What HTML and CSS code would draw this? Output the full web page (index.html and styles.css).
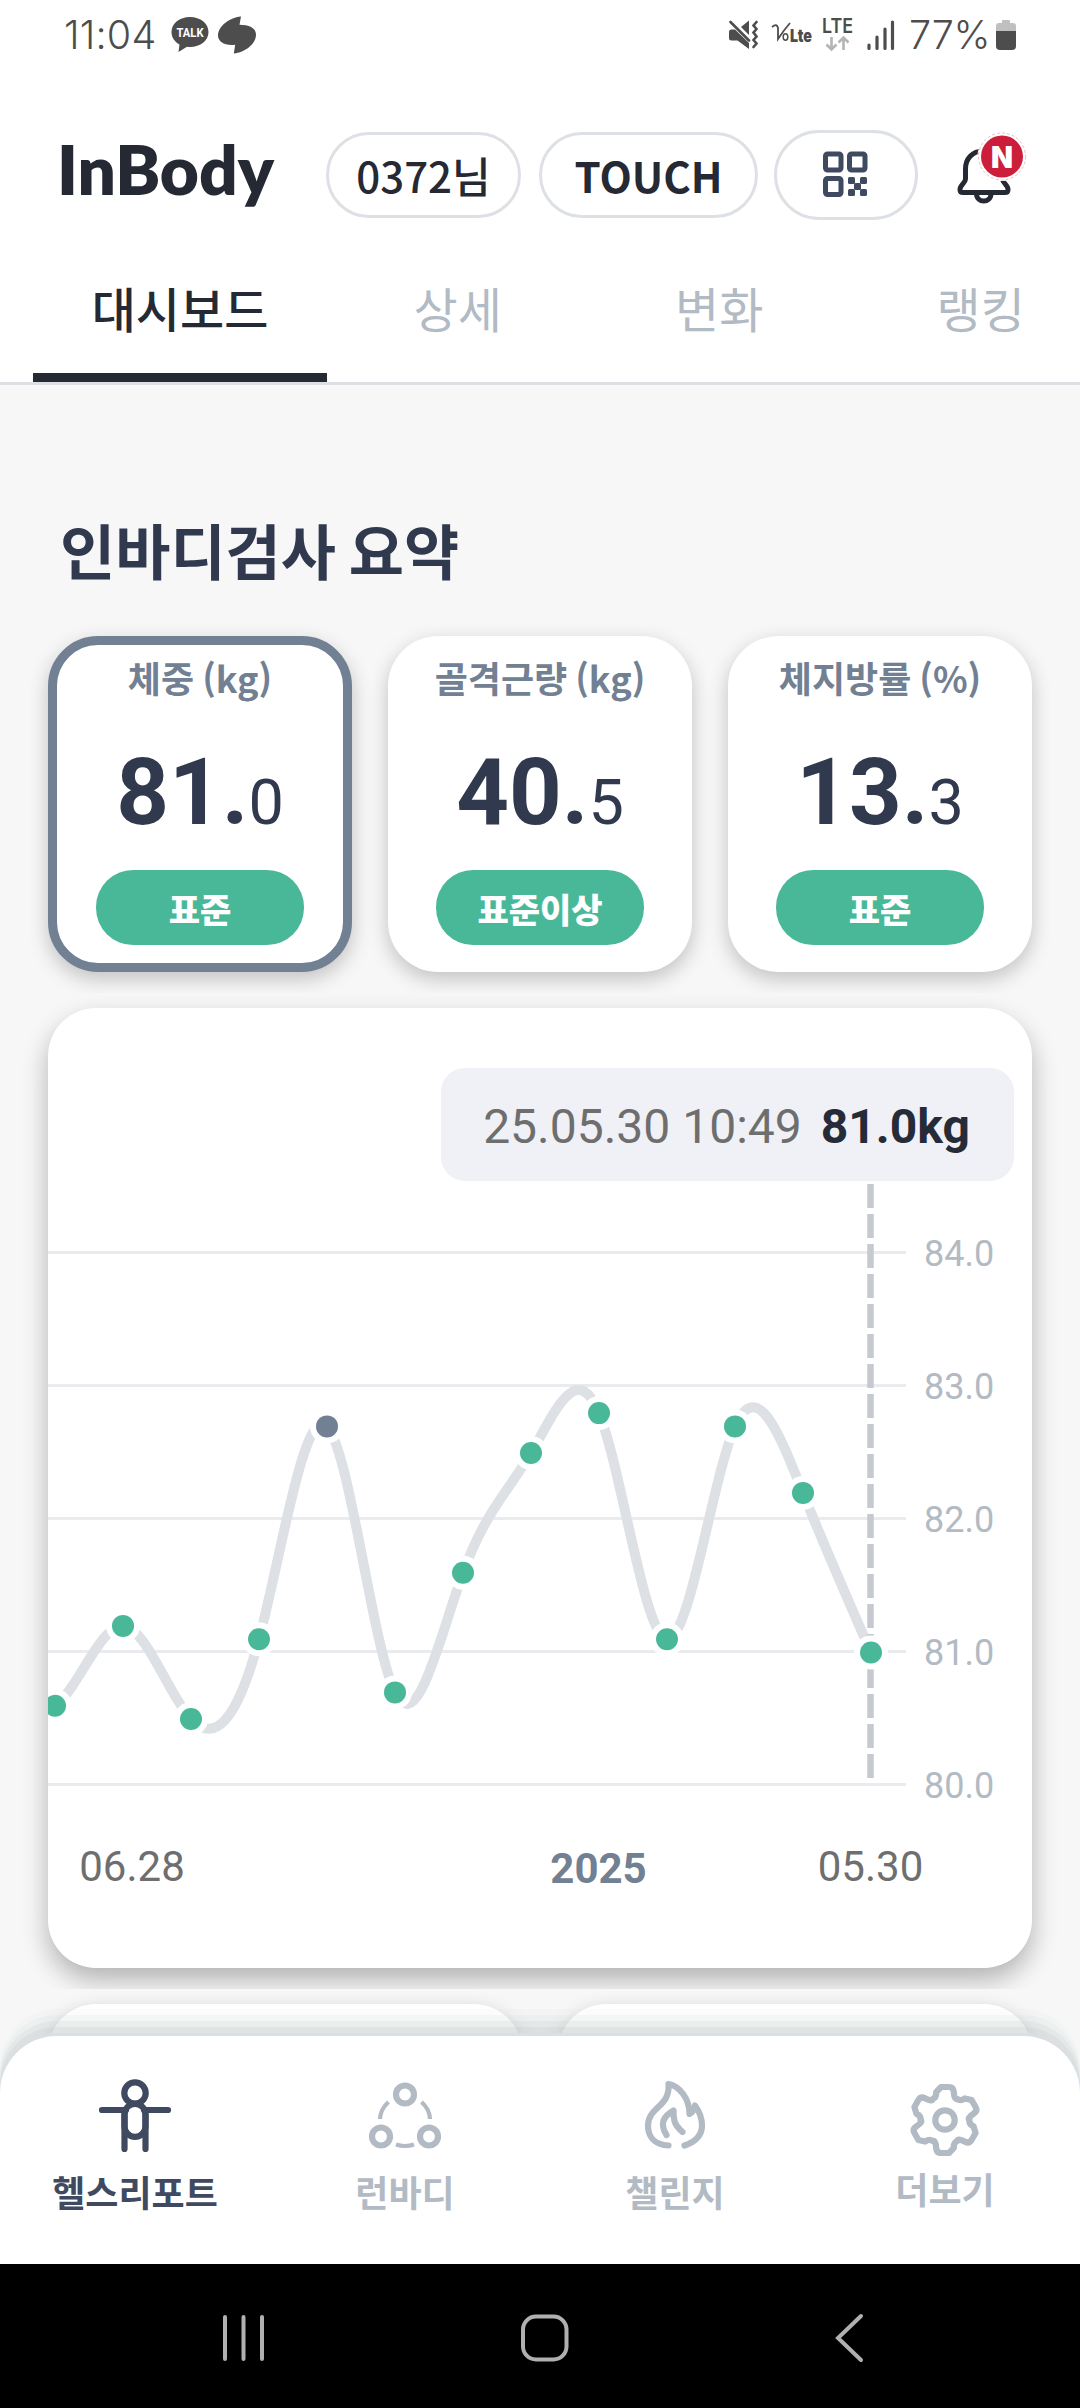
FILE: index.html
```html
<!DOCTYPE html>
<html lang="ko">
<head>
    <meta charset="UTF-8">
    <meta name="viewport" content="width=device-width, initial-scale=1.0">
    <title>InBody</title>
    <link rel="stylesheet" href="styles.css">
</head>
<body>
    <div class="screen">
        <div class="status-bar">
            <span class="clock">11:04</span>
            <svg class="talk" width="38" height="38" viewBox="0 0 38 38">
                <path d="M19 1C8.500 1 .5 7.500 .5 16c0 5.500 3.200 9.800 8 12.500L7.500 36l8.500-5.300c1 .2 2 .3 3 .3 10.500 0 18.500-6.500 18.500-15S29.500 1 19 1z" fill="#4d4d4d"/>
                <text x="19" y="20.500" text-anchor="middle" textLength="27" lengthAdjust="spacingAndGlyphs">TALK</text>
            </svg>
            <svg class="swirl" width="40" height="38" viewBox="0 0 40 38">
                <path d="M24 .5l-1.500 8.300c9 0 16.500 2.700 16.500 10C39 28 28 36.500 16.800 37.500l1.400-8.800C8 30 1 26 1 19.500 1 11 11.500 1.500 24 .5z" fill="#4d4d4d"/>
            </svg>
            <div class="status-right">
                <svg width="30" height="32" viewBox="0 0 30 32">
                    <path d="M1 13q0-2.500 2.500-2.500H7L21 24v6L9.500 21.500h-6Q1 21.500 1 19z M13 8l8-6.500V16z" fill="#4d4d4d"/>
                    <path d="M2.500 3L21 21.500M28.500 3l-3 3.500 3 3.500-3 3.500 3 4-3 3.500 3 3.500-3 3.500" fill="none" stroke="#4d4d4d" stroke-width="2.600" stroke-linecap="round"/>
                </svg>
                <svg class="volte" width="44" height="32" viewBox="0 0 44 32">
                    <path d="M1 8q5-4 6 1v11Q13 11 19 4" fill="none" stroke="#4d4d4d" stroke-width="1.800"/>
                    <ellipse cx="14.500" cy="18" rx="2.300" ry="3.200" fill="none" stroke="#4d4d4d" stroke-width="1.500"/>
                    <text x="19" y="23" textLength="22" lengthAdjust="spacingAndGlyphs">Lte</text>
                </svg>
                <svg class="lte" width="34" height="44" viewBox="0 0 34 44">
                    <text x="1" y="20" textLength="31" lengthAdjust="spacingAndGlyphs">LTE</text>
                    <path d="M10.500 24v12M5.500 31.500l5 5 5-5M22.500 37V25M17.500 29.500l5-5 5 5" fill="none" stroke="#b4b4b4" stroke-width="2.600"/>
                </svg>
                <svg class="signal" width="28" height="32" viewBox="0 0 28 32">
                    <path d="M2 26v3.500M10 18v11.500M18 10v19.500M25.500 3v26.500" stroke="#4d4d4d" stroke-width="3.200" stroke-linecap="round"/>
                </svg>
                <span class="percent">77%</span>
                <svg width="22" height="32" viewBox="0 0 22 32">
                    <path d="M1 12V7q0-3 3-3h3V2q0-1 1-1h6q1 0 1 1v2h3q3 0 3 3v5z" fill="#c0c0c0"/>
                    <path d="M1 12h20v15q0 4-4 4H5q-4 0-4-4z" fill="#4d4d4d"/>
                </svg>
            </div>
        </div>

        <header class="header">
            <svg class="logo" width="236" height="100" viewBox="0 0 236 100">
                <text x="7" y="74.500" textLength="217" lengthAdjust="spacingAndGlyphs">InBody</text>
            </svg>
            <div class="pill user">0372님</div>
            <div class="pill touch">TOUCH</div>
            <div class="pill qr">
                <svg width="48" height="48" viewBox="0 0 48 48">
                    <g fill="none" stroke="#3f4a60" stroke-width="5">
                        <rect x="3.500" y="3" width="15.500" height="16" rx="2"/>
                        <rect x="27.500" y="3" width="15.500" height="16" rx="2"/>
                        <rect x="3.500" y="27.500" width="15.500" height="16" rx="2"/>
                    </g>
                    <g fill="#3f4a60">
                        <rect x="26" y="26" width="7" height="7" rx="1.500"/>
                        <rect x="38" y="26" width="7" height="7" rx="1.500"/>
                        <rect x="32" y="32" width="7" height="7" rx="1.500"/>
                        <rect x="26" y="38" width="7" height="7" rx="1.500"/>
                        <rect x="38" y="38" width="7" height="7" rx="1.500"/>
                    </g>
                </svg>
            </div>
            <svg class="bell" width="72" height="76" viewBox="0 0 72 76">
                <g fill="none" stroke="#252933" stroke-width="5" stroke-linejoin="round">
                    <path d="M28.500 21C17 21 10.500 29 10.500 39v10c0 4-5.500 6-5.500 10.500 0 2 1 3 3 3h42c2 0 3-1 3-3 0-4.500-5.500-6.500-5.500-10.500V39c0-10-7.500-18-19-18z"/>
                    <path d="M21.500 63.500c0 10 14.500 10 14.500 0"/>
                </g>
                <circle cx="47" cy="26.500" r="24.500" fill="#fff"/>
                <circle cx="47" cy="26.500" r="23.500" fill="none" stroke="#e9a9b3" stroke-width=".8" stroke-dasharray="3 2"/>
                <circle cx="47" cy="26.500" r="21" fill="#cc1d3a"/>
                <text x="47" y="37.500" text-anchor="middle" textLength="22" lengthAdjust="spacingAndGlyphs">N</text>
            </svg>
        </header>

        <nav class="tabs">
            <div class="tab active">대시보드</div>
            <div class="tab">상세</div>
            <div class="tab">변화</div>
            <div class="tab">랭킹</div>
        </nav>

        <main class="content">
            <h2>인바디검사 요약</h2>

            <div class="summary">
                <div class="card selected">
                    <div class="label">체중 (kg)</div>
                    <div class="value"><b>81.</b>0</div>
                    <div class="grade">표준</div>
                </div>
                <div class="card">
                    <div class="label">골격근량 (kg)</div>
                    <div class="value"><b>40.</b>5</div>
                    <div class="grade">표준이상</div>
                </div>
                <div class="card">
                    <div class="label">체지방률 (%)</div>
                    <div class="value"><b>13.</b>3</div>
                    <div class="grade">표준</div>
                </div>
            </div>

            <div class="chart-wrap">
                <div class="chart-card">
                    <div class="tooltip"><span>25.05.30 10:49</span><b>81.0kg</b></div>
                    <svg id="chart" width="984" height="787" viewBox="0 0 984 787"></svg>
                </div>
            </div>

            <div class="more-cards">
                <div class="more-card"></div>
                <div class="more-card"></div>
            </div>
        </main>

        <nav class="bottom-nav">
            <div class="nav-item active">
                <svg width="76" height="80" viewBox="0 0 76 80">
                    <g fill="none" stroke="#3f4a60" stroke-width="6.200" stroke-linecap="round">
                        <circle cx="38" cy="17" r="10.700"/>
                        <path d="M5 34h24M47 34h24M27.500 38v35M48.500 38v35"/>
                        <rect x="27.500" y="27.800" width="21" height="33" rx="10.500"/>
                    </g>
                </svg>
                <span>헬스리포트</span>
            </div>
            <div class="nav-item">
                <svg width="76" height="80" viewBox="0 0 76 80">
                    <g fill="none" stroke="#b2bac4">
                        <g stroke-width="6.200">
                            <circle cx="38" cy="18.500" r="9"/>
                            <circle cx="14" cy="60.500" r="9"/>
                            <circle cx="62" cy="60.500" r="9"/>
                        </g>
                        <path d="M21.500 26Q13.500 33 13 43M54.500 26Q62.500 33 63 43M29 68.500Q38 71.500 47 68.500" stroke-width="4.200"/>
                    </g>
                </svg>
                <span>런바디</span>
            </div>
            <div class="nav-item">
                <svg width="76" height="80" viewBox="0 0 76 80">
                    <g fill="none" stroke="#b2bac4" stroke-width="6.200" stroke-linecap="round" stroke-linejoin="round">
                        <path d="M31.500 69.500C17 69 11 60 11 49.500 11 31 33.500 31 31.500 8 42 10 52.500 22 52.500 38q4-2 5.500-8.500C62 35 65 43 65 49.500 65 60 58 66 47.500 69.500"/>
                        <path d="M29.500 59C22 47 27 40 36.500 34.500 36.500 46 38 49 45.500 56"/>
                    </g>
                </svg>
                <span>챌린지</span>
            </div>
            <div class="nav-item raised">
                <svg width="76" height="80" viewBox="0 0 76 80">
                    <g fill="none" stroke="#b2bac4" stroke-width="6.200" stroke-linejoin="round">
                        <circle cx="38" cy="44" r="9.700"/>
                        <path id="gear" d=""/>
                    </g>
                </svg>
                <span>더보기</span>
            </div>
        </nav>

        <div class="system-nav">
            <svg class="recents" width="46" height="50" viewBox="0 0 46 50">
                <path d="M4 4v42M22.500 4v42M41 4v42" stroke="#b0b0b0" stroke-width="4" stroke-linecap="round"/>
            </svg>
            <svg class="home" width="50" height="50" viewBox="0 0 50 50">
                <rect x="3" y="3.500" width="43.500" height="43" rx="13" fill="none" stroke="#b0b0b0" stroke-width="4"/>
            </svg>
            <svg width="30" height="50" viewBox="0 0 30 50">
                <path d="M27 3L4 25l23 22" fill="none" stroke="#b0b0b0" stroke-width="4" stroke-linecap="round"/>
            </svg>
        </div>
    </div>

    <script>
        // the first value lies left of the visible range
        const weights = [81.0, 80.6, 81.2, 80.5, 81.1, 82.7, 80.7, 81.6, 82.5, 82.8, 81.1, 82.7, 82.2, 81.0];
        const selectedPoint = 5;
        const step = 68;
        const px = i => 7 + (i - 1) * step;
        const lineY = kg => 71.5 + (84 - kg) * 133;
        const py = kg => lineY(kg) + 1;

        // natural cubic spline, returns the second derivative at each point
        function spline(y) {
            let n = y.length;
            let m = new Array(n).fill(0);
            for (let k = 0; k < 60; k++) {
                for (let i = 1; i < n - 1; i++) {
                    m[i] = (6 * (y[i - 1] - 2 * y[i] + y[i + 1]) - m[i - 1] - m[i + 1]) / 4;
                }
            }
            return m;
        }

        function curvePath(values) {
            let y = values.map(py);
            let m = spline(y);
            let d = `M${px(0)} ${y[0]}`;
            for (let i = 0; i < y.length - 1; i++) {
                let s0 = y[i + 1] - y[i] - (2 * m[i] + m[i + 1]) / 6;
                let s1 = y[i + 1] - y[i] + (m[i] + 2 * m[i + 1]) / 6;
                d += `C${px(i) + step / 3} ${y[i] + s0 / 3} ${px(i + 1) - step / 3} ${y[i + 1] - s1 / 3} ${px(i + 1)} ${y[i + 1]}`;
            }
            return d;
        }

        function renderChart() {
            let html = '';
            for (let kg = 84; kg >= 80; kg--) {
                let y = lineY(kg);
                html += `<path class="grid" d="M0 ${y}H858"/><text class="scale" x="876" y="${y + 13}">${kg}.0</text>`;
            }
            html += `<path class="curve" d="${curvePath(weights)}"/>`;
            html += `<path class="cursor" d="M822.500 3V597"/>`;
            weights.forEach((kg, i) => {
                let color = i === selectedPoint ? '#728093' : '#49b899';
                html += `<circle cx="${px(i)}" cy="${py(kg)}" r="17" fill="#fff"/><circle cx="${px(i)}" cy="${py(kg)}" r="11" fill="${color}"/>`;
            });
            html += '<text class="date" x="84" y="700">06.28</text>';
            html += '<text class="date year" x="550.500" y="702">2025</text>';
            html += '<text class="date" x="822.500" y="700">05.30</text>';
            document.getElementById('chart').innerHTML = html;
        }

        // six rounded teeth around the centre
        function renderGear() {
            let d = '';
            for (let i = 0; i < 6; i++) {
                let a = i * Math.PI / 3;
                let p = (x, y) => `${(38 + x * Math.cos(a) - y * Math.sin(a)).toFixed(2)} ${(44 + x * Math.sin(a) + y * Math.cos(a)).toFixed(2)}`;
                d += `${i ? 'L' : 'M'}${p(-4, -33)}L${p(4, -33)}Q${p(8.5, -33)} ${p(8.8, -28)}Q${p(9.2, -20)} ${p(12.2, -21.2)}Q${p(15.5, -18.5)} ${p(19.8, -21.6)}`;
            }
            document.getElementById('gear').setAttribute('d', d + 'Z');
        }

        renderChart();
        renderGear();
    </script>
</body>
</html>
```
FILE: styles.css
```css
* {
    box-sizing: border-box;
}
body {
    margin: 0;
    font-family: 'Noto Sans CJK KR', sans-serif;
    background-color: #f7f7f8;
    color: #252933;
}
svg {
    display: block;
    flex-shrink: 0;
}
.screen {
    position: relative;
    width: 1080px;
    height: 2408px;
    display: flex;
    flex-direction: column;
    overflow: hidden;
}

/* status bar */
.status-bar {
    height: 70px;
    padding: 0 63px 0 64px;
    background-color: #fff;
    display: flex;
    align-items: center;
    font-family: Inter, Roboto, sans-serif;
    color: #4d4d4d;
}
.clock, .percent {
    font-size: 39.500px;
    font-weight: 300;
    line-height: 72px;
    white-space: nowrap;
}
.clock {
    width: 107px;
    letter-spacing: 0.200px;
}
.talk text {
    font: bold 13px Roboto, sans-serif;
    fill: #fff;
}
.swirl {
    margin-left: 8px;
}
.status-right {
    margin-left: auto;
    display: flex;
    align-items: center;
}
.volte {
    margin-left: 13px;
}
.volte text {
    font: 900 18px Inter, sans-serif;
    fill: #4d4d4d;
}
.lte {
    margin-left: 6px;
}
.lte text {
    font: 600 20px Inter, sans-serif;
    fill: #4d4d4d;
}
.signal {
    margin: 0 14px 0 12px;
}
.percent {
    width: 86px;
    letter-spacing: -0.200px;
}

/* header */
.header {
    height: 180px;
    padding-left: 50px;
    background-color: #fff;
    display: flex;
}
.logo {
    margin-top: 50px;
}
.logo text {
    font: 800 68px Lato, sans-serif;
    fill: #252933;
}
.pill {
    height: 86px;
    margin-top: 62px;
    border: 3px solid #dde0e5;
    border-radius: 43px;
    font-size: 42px;
    font-weight: 500;
    line-height: 79px;
    text-align: center;
}
.user {
    width: 195px;
    margin-left: 40px;
}
.touch {
    width: 219px;
    margin-left: 18px;
    font-weight: 700;
}
.qr {
    width: 144px;
    height: 90px;
    margin: 60px 0 0 16px;
    border-radius: 45px;
    display: flex;
    align-items: center;
    justify-content: center;
}
.bell {
    margin: 60px 0 0 37px;
}
.bell text {
    font: 900 30px Inter, sans-serif;
    fill: #fff;
}

/* tabs */
.tabs {
    height: 135px;
    padding-left: 33px;
    background-color: #fff;
    border-bottom: 3px solid #dde0e5;
    display: flex;
}
.tab {
    flex: 0 0 261.500px;
    font-size: 48px;
    line-height: 115px;
    text-align: center;
    color: #b2bac4;
}
.tab.active {
    flex-basis: 294px;
    border-bottom: 9px solid #252933;
    font-weight: 500;
    color: #252933;
}

/* content */
.content {
    height: 1879px;
    padding: 129px 48px 0;
    overflow: hidden;
}
h2 {
    margin: 0 0 52px 12px;
    font-size: 60px;
    font-weight: 700;
    line-height: 70px;
    word-spacing: -4px;
    color: #31394e;
}
.summary {
    display: flex;
    gap: 36px;
    clip-path: inset(-40px -18px -21px -18px);
}
.card {
    flex: 1;
    height: 336px;
    padding: 15px 48px 0;
    border-radius: 50px;
    background-color: #fff;
    box-shadow: 0 7px 20px rgba(0, 0, 0, 0.22);
    text-align: center;
}
.card.selected {
    padding: 6px 39px 0;
    border: 9px solid #728093;
}
.label {
    margin: 0 -40px;
    font-size: 36px;
    font-weight: 700;
    line-height: 52px;
    word-spacing: -2px;
    color: #728093;
}
.value {
    margin-top: 35px;
    height: 112px;
    font-family: Roboto, sans-serif;
    font-size: 63px;
    line-height: 110px;
    color: #31394e;
}
.value b {
    font-size: 92px;
    font-weight: 700;
}
.grade {
    height: 75px;
    margin-top: 20px;
    border-radius: 37px;
    background-color: #49b899;
    color: #fff;
    font-size: 34px;
    font-weight: 900;
    line-height: 77px;
}

/* chart */
.chart-wrap {
    margin-top: 36px;
    clip-path: inset(-14px -48px -21px -48px);
}
.chart-card {
    height: 960px;
    border-radius: 48px;
    background-color: #fff;
    box-shadow: 0 12px 26px rgba(0, 0, 0, 0.28);
    display: flex;
    flex-direction: column;
    padding-top: 60px;
    overflow: hidden;
}
.tooltip {
    align-self: flex-end;
    width: 573px;
    height: 113px;
    margin-right: 18px;
    padding-right: 2px;
    border-radius: 24px;
    background-color: #f0f1f6;
    display: flex;
    justify-content: center;
    gap: 19px;
    font-family: Roboto, sans-serif;
    font-size: 48px;
    line-height: 117px;
    color: #6e6e6e;
}
.tooltip b {
    color: #252c38;
}
#chart text {
    font-family: Roboto, sans-serif;
}
.grid {
    stroke: #eaebef;
    stroke-width: 3;
}
#chart .scale {
    font-size: 36px;
    fill: #b2bac4;
}
.curve {
    fill: none;
    stroke: #dde0e5;
    stroke-width: 10;
}
.cursor {
    stroke: #c7c9d0;
    stroke-width: 6.500;
    stroke-dasharray: 24 6;
}
#chart .date {
    font-size: 42px;
    text-anchor: middle;
    fill: #6e6e6e;
}
#chart .year {
    font-weight: 700;
    fill: #728093;
}
.more-cards {
    margin-top: 36px;
    display: flex;
    gap: 36px;
}
.more-card {
    flex: 1;
    height: 300px;
    border-radius: 48px;
    background-color: #fff;
    box-shadow: 0 7px 20px rgba(0, 0, 0, 0.22);
}

/* bottom navigation */
.bottom-nav {
    position: absolute;
    left: 0;
    bottom: 144px;
    width: 1080px;
    height: 228px;
    padding-top: 40px;
    border-radius: 57px 57px 0 0;
    background-color: #fff;
    box-shadow: 0 -3px 0 #dbdfe5,
        0 -9px 0 rgba(190, 195, 200, 0.22),
        0 -15px 0 rgba(190, 195, 200, 0.16),
        0 -21px 0 rgba(200, 212, 208, 0.14),
        0 -27px 0 rgba(210, 225, 220, 0.08);
    display: flex;
}
.nav-item {
    flex: 1;
    display: flex;
    flex-direction: column;
    align-items: center;
    font-size: 36px;
    font-weight: 700;
    line-height: 52px;
    color: #b2bac4;
}
.nav-item span {
    margin-top: 9px;
}
.nav-item.raised span {
    margin-top: 6px;
}
.nav-item.active {
    color: #3f4a60;
}

/* system navigation */
.system-nav {
    height: 144px;
    padding: 4px 216px 0 221px;
    background-color: #000;
    display: flex;
    align-items: center;
}
.home {
    margin: 0 auto 0 253px;
}
```
